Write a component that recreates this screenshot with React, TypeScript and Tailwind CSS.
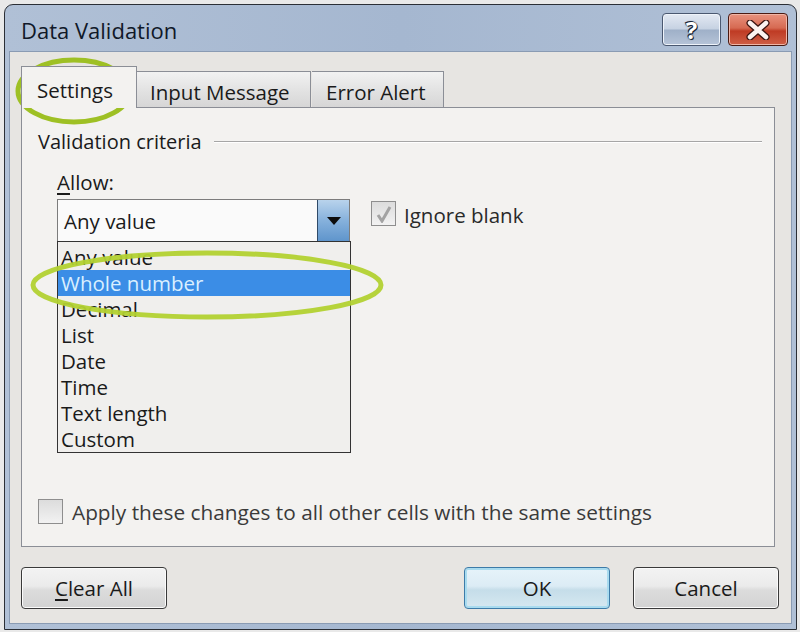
const font = "font-['Open_Sans',sans-serif]"

const items = ["Any value", "Whole number", "Decimal", "List", "Date", "Time", "Text length", "Custom"]

const DialogButton = ({ children, primary }: { children: React.ReactNode; primary?: boolean }) => (
  <button
    className={
      "w-[146px] h-[42px] rounded-[4px] border text-[20.5px] text-[#1a1a1a] flex items-center justify-center " +
      (primary
        ? "border-[#3d7ba8] bg-[linear-gradient(#e6f3fa,#dcecf5_45%,#c5dde9_55%,#d6e8f1)] shadow-[inset_0_0_0_2px_#a9dbef]"
        : "border-[#3a3a3a] bg-[linear-gradient(#f3f3f3,#ebebeb_45%,#dcdcdc_55%,#d2d2d2)] shadow-[inset_0_0_0_1px_#fbfbfb]")
    }
  >
    {children}
  </button>
)

const Check = ({ checked }: { checked?: boolean }) => (
  <div className="w-[25px] h-[25px] border border-[#8e8e8e] bg-[linear-gradient(#dcdcdc,#f2f2f2)] flex items-center justify-center">
    {checked && (
      <svg width="16" height="18" viewBox="0 0 16 18">
        <path d="M2 10 L6 16 L14 2" fill="none" stroke="#a3a3a3" strokeWidth="3" />
      </svg>
    )}
  </div>
)

export default function App() {
  return (
    <div className={`relative w-[800px] h-[632px] bg-[#e9e9e9] pl-[4px] pt-[4px] ${font}`}>
      <div className="w-[793px] h-[626px] rounded-t-[9px] border border-[#2b2f36] bg-[linear-gradient(90deg,#b0c0d6,#a5b7d0_50%,#b0c0d6)] px-[4px] pb-[5px] flex flex-col">
        {/* title bar */}
        <div className="h-[46px] flex items-start justify-between pl-[12px] pr-[4px]">
          <span className="mt-[9px] text-[22px] text-[#101828]">Data Validation</span>
          <div className="flex gap-[7px] mt-[8px]">
            <div className="w-[59px] h-[33px] rounded-[4px] border border-[#4a5870] bg-[linear-gradient(#e3e9f3,#c6d2e2_48%,#9fb0c8_52%,#b6c4d8)] shadow-[inset_0_0_0_1px_#eef3fa] flex items-center justify-center">
              <span className="text-[24px] font-bold leading-none text-white [text-shadow:0_0_2px_#1b2535,0_0_1px_#1b2535,1px_1px_0_#1b2535,-1px_-1px_0_#1b2535]">?</span>
            </div>
            <div className="w-[60px] h-[33px] rounded-[4px] border border-[#4a1a12] bg-[linear-gradient(#e8927e,#d66a52_45%,#bf3b24_55%,#cf5f46)] shadow-[inset_0_0_0_1px_#f0b5a6] flex items-center justify-center">
              <svg width="26" height="20" viewBox="0 0 26 20">
                <path d="M5 3 L21 17 M21 3 L5 17" stroke="#3a1410" strokeWidth="7" strokeLinecap="round" />
                <path d="M5 3 L21 17 M21 3 L5 17" stroke="#fbf3f0" strokeWidth="4.5" strokeLinecap="round" />
              </svg>
            </div>
          </div>
        </div>

        {/* client */}
        <div className="flex-1 border border-[#8a9bb3] bg-[#e7e5e2] flex flex-col pt-[14px]">
          <div className="pl-[11px] pr-[14px]">
            {/* tabs */}
            <div className="relative z-10 flex items-end -mb-px text-[20.5px] text-[#1a1a1a]">
              <div className="h-[42px] w-[116px] border border-b-0 border-[#8b8e96] bg-[#f3f2f0] pl-[15px] pt-[8px]">Settings</div>
              <div className="h-[37px] w-[174px] border border-l-0 border-[#8b8e96] bg-[linear-gradient(#f2f2f2,#e3e3e3_50%,#d6d6d6)] pl-[13px] pt-[5px]">Input Message</div>
              <div className="h-[37px] w-[132px] border border-l-0 border-[#8b8e96] bg-[linear-gradient(#f2f2f2,#e3e3e3_50%,#d6d6d6)] ml-px pl-[14px] pt-[5px]">Error Alert</div>
            </div>

            {/* panel */}
            <div className="h-[440px] w-[754px] border border-[#8b8e96] bg-[#f3f2f0] text-[20.5px] text-[#1a1a1a] flex flex-col">
              <div className="mt-[20px] h-[28px] flex items-center pl-[16px] pr-[12px]">
                <span className="text-[20px]">Validation criteria</span>
                <div className="flex-1 ml-[12px] h-[2px] border-t border-[#a6a6a6] border-b border-b-white" />
              </div>

              <div className="mt-[12px] h-[28px] flex items-center pl-[35px]">
                <span><span className="underline underline-offset-[3px]">A</span>llow:</span>
              </div>

              <div className="mt-[3px] flex pl-[35px]">
                <div className="flex flex-col w-[294px]">
                  <div className="h-[43px] w-[293px] border border-[#7c7c7c] bg-[#fafafa] flex">
                    <div className="flex-1 flex items-center pl-[6px] pt-[1px]">Any value</div>
                    <div className="w-[32px] border-l border-[#2f4a68] bg-[linear-gradient(#b9d3ec,#86b1dc_50%,#5f95cc)] flex items-center justify-center">
                      <svg width="14" height="8" viewBox="0 0 14 8">
                        <path d="M0 0 H14 L7 8 Z" fill="#0d0d0d" />
                      </svg>
                    </div>
                  </div>
                  <div className="-mt-px border border-[#333] bg-[#f0efed] pt-[2px]">
                    {items.map((it) => (
                      <div
                        key={it}
                        className={
                          "h-[26px] flex items-center pl-[3px] pt-[1px] " +
                          (it === "Whole number" ? "bg-[#3b8de6] text-[#d9efff]" : "")
                        }
                      >
                        {it}
                      </div>
                    ))}
                  </div>
                </div>

                <div className="ml-[20px] mt-[2px] flex items-center gap-[8px] h-[25px]">
                  <Check checked />
                  <span className="text-[#2a2a2a] pt-[3px]">Ignore blank</span>
                </div>
              </div>

              <div className="mt-[46px] pl-[16px] flex items-center gap-[9px] h-[25px]">
                <Check />
                <span className="text-[#3a3a3a] pt-[3px] text-[20.8px]">Apply these changes to all other cells with the same settings</span>
              </div>
            </div>
          </div>

          {/* buttons */}
          <div className="mt-[20px] flex pl-[11px] pr-[12px]">
            <DialogButton>
              <span><span className="underline underline-offset-[3px]">C</span>lear All</span>
            </DialogButton>
            <div className="flex-1" />
            <DialogButton primary>OK</DialogButton>
            <div className="w-[23px]" />
            <DialogButton>Cancel</DialogButton>
          </div>
        </div>
      </div>

      {/* annotation rings */}
      <svg className="absolute left-0 top-0 pointer-events-none" width="800" height="632">
        <ellipse cx="74" cy="91" rx="56" ry="31" fill="none" stroke="#9ec024" strokeWidth="5" />
        <ellipse cx="207" cy="285" rx="174" ry="32" fill="none" stroke="#b2d132" strokeWidth="5" opacity="0.95" />
      </svg>
    </div>
  )
}
